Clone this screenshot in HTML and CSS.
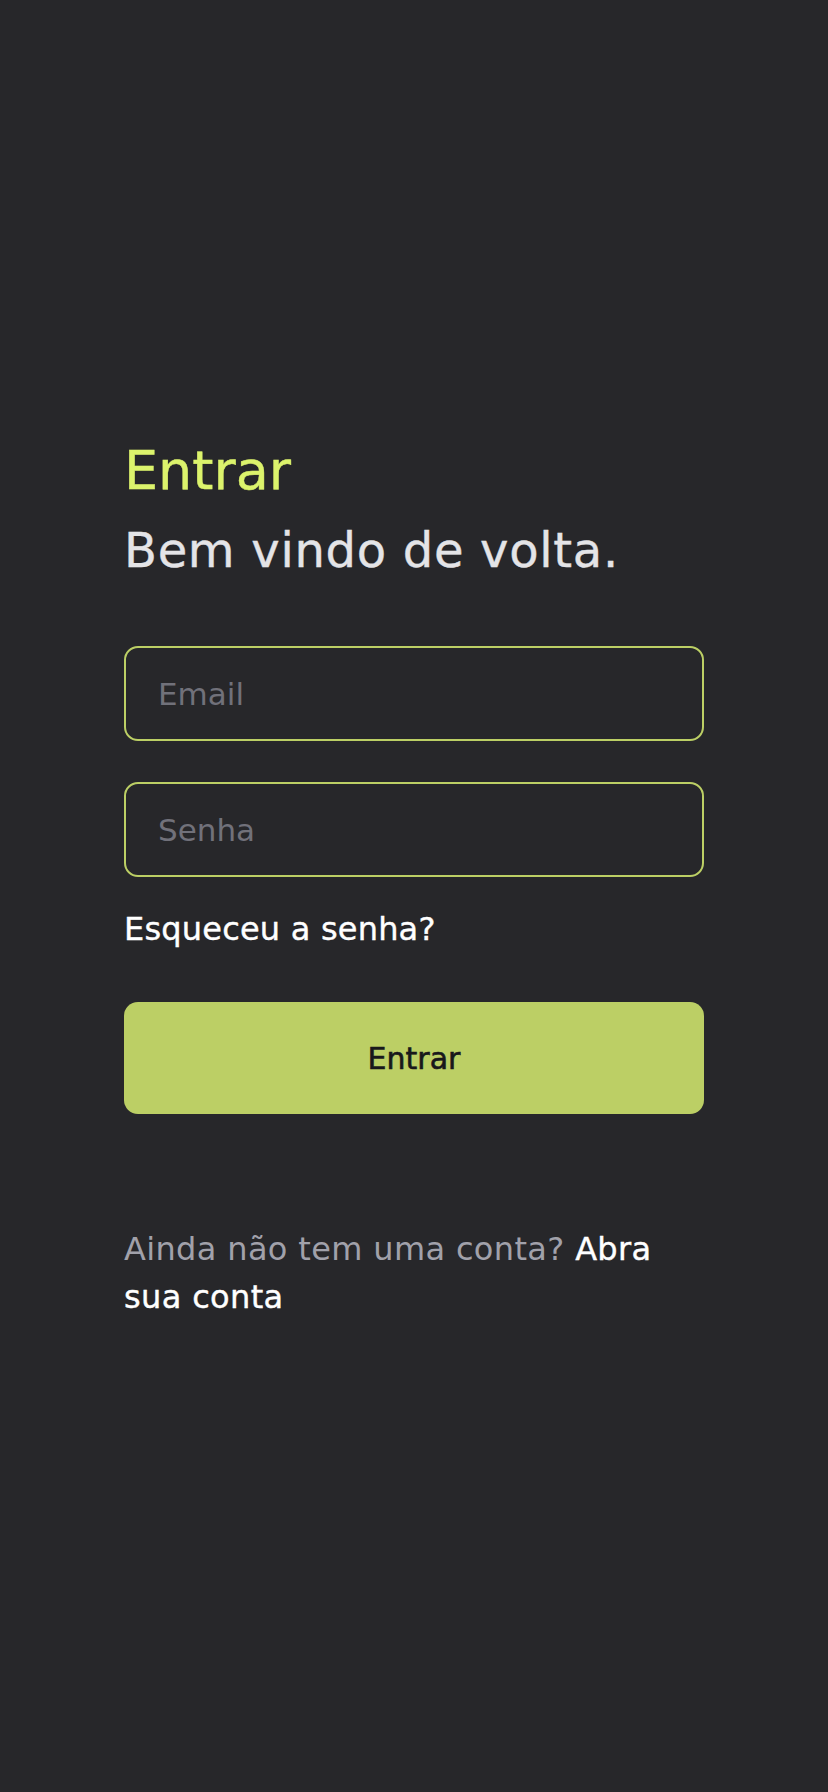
FILE: index.html
```html
<!DOCTYPE html>
<html lang="pt-BR">
<head>
<meta charset="utf-8">
<title>Entrar</title>
<link rel="stylesheet" href="styles.css">
</head>
<body>
<main class="login">
  <h1 class="login-title">Entrar</h1>
  <h2 class="login-subtitle">Bem vindo de volta.</h2>
  <form class="login-form">
    <input class="field" type="email" placeholder="Email">
    <input class="field field-second" type="password" placeholder="Senha">
    <a class="forgot" href="#">Esqueceu a senha?</a>
    <button class="submit" type="button">Entrar</button>
  </form>
  <p class="signup">Ainda não tem uma conta? <a class="signup-link" href="#">Abra sua conta</a></p>
</main>
</body>
</html>
```
FILE: styles.css
```css
* { box-sizing: border-box; }
html, body {
  margin: 0;
  padding: 0;
  background: #27272a;
}
body {
  font-family: "DejaVu Sans", "Noto Sans", sans-serif;
  min-height: 1792px;
}
.login {
  width: 580px;
  margin: 0 auto;
  padding-top: 437px;
}
.login-title {
  margin: 0;
  font-size: 54px;
  line-height: 68px;
  font-weight: 400;
  color: #dcf36c;
  -webkit-text-stroke: 0.4px #dcf36c;
}
.login-subtitle {
  margin: 16px 0 0;
  font-size: 48px;
  line-height: 58px;
  font-weight: 400;
  letter-spacing: 0.7px;
  color: #e4e4e7;
  -webkit-text-stroke: 0.4px #e4e4e7;
}
.login-form {
  display: flex;
  flex-direction: column;
  margin-top: 67px;
}
.field {
  height: 95px;
  width: 100%;
  padding: 0 32px;
  background: transparent;
  border: 2px solid #bccf65;
  border-radius: 14px;
  font-family: inherit;
  font-size: 31px;
  color: #e4e4e7;
  outline: none;
}
.field::placeholder { color: #71717a; }
.field-second { margin-top: 41px; }
.forgot {
  margin-top: 28px;
  font-size: 32px;
  line-height: 48px;
  letter-spacing: 0.2px;
  color: #ffffff;
  text-decoration: none;
  -webkit-text-stroke: 0.4px #ffffff;
  align-self: flex-start;
}
.submit {
  margin-top: 49px;
  height: 112px;
  width: 100%;
  border: none;
  border-radius: 14px;
  background: #bccf65;
  font-family: inherit;
  font-size: 30px;
  color: #18181b;
  -webkit-text-stroke: 0.6px #18181b;
  cursor: pointer;
}
.signup {
  margin: 111px 0 0;
  font-size: 32px;
  line-height: 48px;
  letter-spacing: 0.35px;
  color: #a1a1aa;
}
.signup-link {
  color: #ffffff;
  text-decoration: none;
  -webkit-text-stroke: 0.4px #ffffff;
}
```
